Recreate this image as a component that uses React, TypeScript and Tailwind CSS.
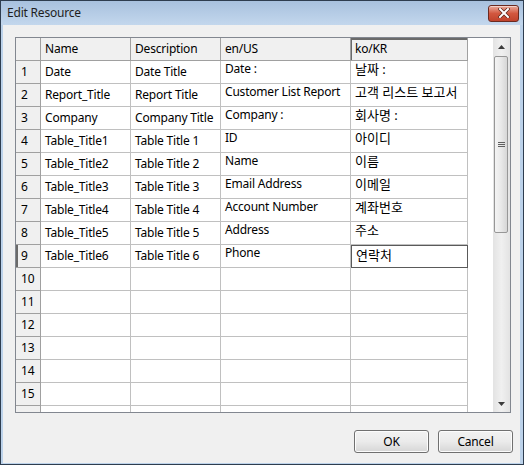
import React from "react";

const ROWS: [string, string, string, string][] = [
  ["Date", "Date Title", "Date :", "날짜 :"],
  ["Report_Title", "Report Title", "Customer List Report", "고객 리스트 보고서"],
  ["Company", "Company Title", "Company :", "회사명 :"],
  ["Table_Title1", "Table Title 1", "ID", "아이디"],
  ["Table_Title2", "Table Title 2", "Name", "이름"],
  ["Table_Title3", "Table Title 3", "Email Address", "이메일"],
  ["Table_Title4", "Table Title 4", "Account Number", "계좌번호"],
  ["Table_Title5", "Table Title 5", "Address", "주소"],
  ["Table_Title6", "Table Title 6", "Phone", "연락처"],
];

const EMPTY_ROWS = [10, 11, 12, 13, 14, 15];

function CloseButton() {
  return (
    <div className="w-[31px] h-[17px] rounded-[3px] border border-[#6b2a20] bg-gradient-to-b from-[#e9a99a] via-[#d2573f] to-[#c0432c] flex items-center justify-center shadow-[inset_0_1px_0_rgba(255,255,255,0.5)]">
      <svg width="12" height="10" viewBox="0 0 12 10">
        <path d="M2 1 L10 9 M10 1 L2 9" stroke="#5a2419" strokeWidth="3.4" strokeLinecap="square" />
        <path d="M2 1 L10 9 M10 1 L2 9" stroke="#ffffff" strokeWidth="2" strokeLinecap="square" />
      </svg>
    </div>
  );
}

function Arrow({ up }: { up?: boolean }) {
  return (
    <div className="h-[17px] flex items-center justify-center">
      <svg width="7" height="4" viewBox="0 0 7 4">
        {up ? <path d="M0 4 L3.5 0 L7 4 Z" fill="#3c3c3c" /> : <path d="M0 0 L3.5 4 L7 0 Z" fill="#3c3c3c" />}
      </svg>
    </div>
  );
}

function Scrollbar() {
  return (
    <div className="w-[17px] h-full flex flex-col bg-[#eaeaea] bg-gradient-to-r from-[#e3e3e3] via-[#f0f0f0] to-[#e3e3e3]">
      <Arrow up />
      <div className="mt-[1px] ml-[1px] w-[14px] h-[177px] rounded-[2px] border border-[#979797] bg-gradient-to-r from-[#f4f4f4] via-[#e9e9e9] to-[#d6d6d6] flex flex-col items-center justify-center gap-[1px]">
        <div className="w-[7px] h-[1px] bg-[#5f5f5f]" />
        <div className="w-[7px] h-[1px] bg-[#5f5f5f]" />
        <div className="w-[7px] h-[1px] bg-[#5f5f5f]" />
      </div>
      <div className="flex-1" />
      <Arrow />
    </div>
  );
}

function GridTable() {
  return (
    <div className="flex-1 h-full overflow-hidden bg-white">
      {/* header */}
      <div className="flex h-[23px]">
        <div className="w-[25px] h-full bg-[#f0f0f0] border-r border-b border-[#a0a0a0]" />
        <div className="w-[90px] h-full bg-[#f0f0f0] border-r border-b border-[#a0a0a0] pl-[4px] flex items-center">Name</div>
        <div className="w-[90px] h-full bg-[#f0f0f0] border-r border-b border-[#a0a0a0] pl-[4px] flex items-center">Description</div>
        <div className="w-[130px] h-full bg-[#f0f0f0] border-r border-b border-[#a0a0a0] pl-[4px] flex items-center">en/US</div>
        <div className="w-[117px] h-full bg-[#f0f0f0] border-r border-b border-[#a0a0a0] pl-[4px] flex items-center shadow-[inset_1px_0_0_#6a6a6a,inset_0_2px_0_#6a6a6a]">ko/KR</div>
      </div>
      {ROWS.map((r, i) => (
        <div key={i} className="flex h-[23px]">
          <div
            className={
              i === 8
                ? "w-[25px] h-full bg-[#f0f0f0] border-r border-b border-[#a0a0a0] pl-[5px] flex items-center shadow-[inset_2px_0_0_#6a6a6a]"
                : "w-[25px] h-full bg-[#f0f0f0] border-r border-b border-[#a0a0a0] pl-[5px] flex items-center"
            }
          >
            {i + 1}
          </div>
          <div className="w-[90px] h-full border-r border-b border-[#c0c0c0] pl-[4px] flex items-center whitespace-nowrap overflow-hidden">{r[0]}</div>
          <div className="w-[90px] h-full border-r border-b border-[#c0c0c0] pl-[4px] flex items-center whitespace-nowrap overflow-hidden">{r[1]}</div>
          <div className="w-[130px] h-full border-r border-b border-[#c0c0c0] pl-[4px] leading-[16px] whitespace-nowrap overflow-hidden">{r[2]}</div>
          {i === 8 ? (
            <div className="w-[117px] h-full border-r border-b border-[#5a5a5a] pl-[5px] flex items-center text-[13px] tracking-normal shadow-[inset_1px_1px_0_#5a5a5a] whitespace-nowrap">{r[3]}</div>
          ) : (
            <div className="w-[117px] h-full border-r border-b border-[#c0c0c0] pl-[4px] leading-[16px] text-[13px] tracking-normal whitespace-nowrap overflow-hidden">{r[3]}</div>
          )}
        </div>
      ))}
      {EMPTY_ROWS.map((n) => (
        <div key={n} className="flex h-[23px]">
          <div className="w-[25px] h-full bg-[#f0f0f0] border-r border-b border-[#a0a0a0] pl-[5px] flex items-center">{n}</div>
          <div className="w-[90px] h-full border-r border-b border-[#c0c0c0]" />
          <div className="w-[90px] h-full border-r border-b border-[#c0c0c0]" />
          <div className="w-[130px] h-full border-r border-b border-[#c0c0c0]" />
          <div className="w-[117px] h-full border-r border-b border-[#c0c0c0]" />
        </div>
      ))}
      {/* partially scrolled-in row 16 */}
      <div className="flex h-[23px]">
        <div className="w-[25px] h-full bg-[#f0f0f0] border-r border-[#a0a0a0] pl-[5px] pt-[4px] leading-[14px] text-[11px]">16</div>
        <div className="w-[90px] h-full border-r border-[#c0c0c0]" />
        <div className="w-[90px] h-full border-r border-[#c0c0c0]" />
        <div className="w-[130px] h-full border-r border-[#c0c0c0]" />
        <div className="w-[117px] h-full border-r border-[#c0c0c0]" />
      </div>
    </div>
  );
}

function DialogButton({ label }: { label: string }) {
  return (
    <div className="w-[75px] h-[23px] rounded-[3px] border border-[#707070] bg-gradient-to-b from-[#f2f2f2] via-[#ebebeb] to-[#d6d6d6] flex items-center justify-center shadow-[inset_0_0_0_1px_#fcfcfc]">
      {label}
    </div>
  );
}

export default function App() {
  return (
    <div className="w-[524px] h-[465px] flex flex-col border border-[#2e3d4f] bg-[#bcd2ea] text-[12px] tracking-[-0.2px] text-black font-['Segoe_UI','Noto_Sans','Noto_Sans_CJK_KR',sans-serif]">
      <div className="h-[24px] flex items-center justify-between pl-[6px] pr-[4px] bg-gradient-to-b from-[#a8c1de] to-[#c3d7ed]">
        <span className="text-[#1e1e1e]">Edit Resource</span>
        <CloseButton />
      </div>
      <div className="flex-1 ml-[2px] mr-[3px] mb-[1px] bg-[#f0f0f0] flex flex-col pl-[12px] pt-[12px]">
        <div className="w-[496px] h-[376px] border border-[#828790] flex">
          <GridTable />
          <Scrollbar />
        </div>
        <div className="flex justify-end gap-[9px] mt-[17px] pr-[7px]">
          <DialogButton label="OK" />
          <DialogButton label="Cancel" />
        </div>
      </div>
    </div>
  );
}
